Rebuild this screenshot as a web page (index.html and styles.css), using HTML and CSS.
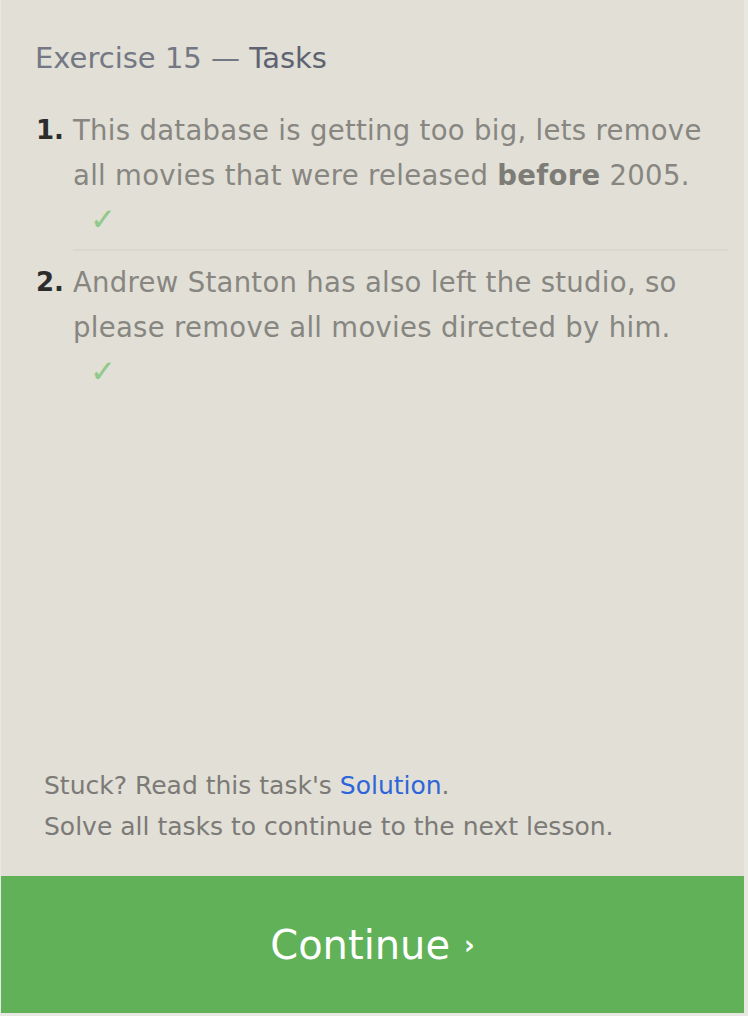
FILE: index.html
```html
<!DOCTYPE html>
<html>
<head>
<meta charset="utf-8">
<link rel="stylesheet" href="styles.css">
</head>
<body>
<div class="frame">
  <div class="panel">
    <div class="content">
      <h2 class="title">Exercise 15 — <span class="title-strong">Tasks</span></h2>
      <ol class="tasks">
        <li class="task">
          <span class="num">1.</span>
          <div class="task-body">
            <p class="task-text">This database is getting too big, lets remove all movies that were released <b>before</b> 2005.</p>
            <div class="check">✓</div>
          </div>
        </li>
        <li class="task">
          <span class="num">2.</span>
          <div class="task-body">
            <p class="task-text">Andrew Stanton has also left the studio, so please remove all movies directed by him.</p>
            <div class="check">✓</div>
          </div>
        </li>
      </ol>
    </div>
    <div class="footer">
      <p class="hint">Stuck? Read this task's <a class="link" href="#">Solution</a>.</p>
      <p class="hint">Solve all tasks to continue to the next lesson.</p>
    </div>
    <div class="continue">Continue <span class="chev">›</span></div>
  </div>
</div>
</body>
</html>
```
FILE: styles.css
```css
html, body {
  margin: 0;
  padding: 0;
  background: #e1dfd7;
}
body {
  width: 748px;
  height: 1016px;
  overflow: hidden;
  font-family: "DejaVu Sans", sans-serif;
}
.frame {
  height: 1016px;
  padding-right: 4px;
  background: #e9e7e1;
  box-sizing: border-box;
}
.panel {
  height: 1013px;
  margin-left: 1px;
  background: #e1dfd6;
  display: flex;
  flex-direction: column;
}
.content {
  flex: 1;
  padding: 40px 16px 0 34px;
}
.title {
  margin: 0;
  font-weight: normal;
  font-size: 29px;
  line-height: 36px;
  color: #737884;
}
.title-strong {
  color: #5e6372;
}
.tasks {
  list-style: none;
  margin: 32px 0 0;
  padding: 0;
}
.task {
  display: flex;
}
.num {
  width: 37px;
  flex: none;
  padding-left: 1px;
  font-size: 26px;
  font-weight: bold;
  line-height: 45px;
  color: #2c2c2c;
}
.task-body {
  flex: 1;
}
.task:first-child .task-body {
  border-bottom: 2px solid #d9d8cc;
  padding-bottom: 10px;
  margin-bottom: 9px;
}
.task-text {
  margin: 0;
  font-size: 27.5px;
  letter-spacing: 0.3px;
  line-height: 45px;
  color: #878681;
}
.task-text b {
  color: #7d7c77;
}
.check {
  margin-left: 17px;
  margin-top: 1px;
  font-size: 31px;
  font-weight: bold;
  line-height: 40px;
  color: #8fc98b;
}
.footer {
  padding: 0 0 29px 43px;
}
.hint {
  margin: 0;
  font-size: 25px;
  line-height: 41px;
  color: #7c7a77;
}
.link {
  color: #2e65d8;
  text-decoration: none;
}
.continue {
  height: 137px;
  background: #61b158;
  color: #ffffff;
  display: flex;
  align-items: center;
  justify-content: center;
  font-size: 40px;
}
.chev {
  font-size: 26px;
  font-weight: bold;
  margin-left: 14px;
}
```
